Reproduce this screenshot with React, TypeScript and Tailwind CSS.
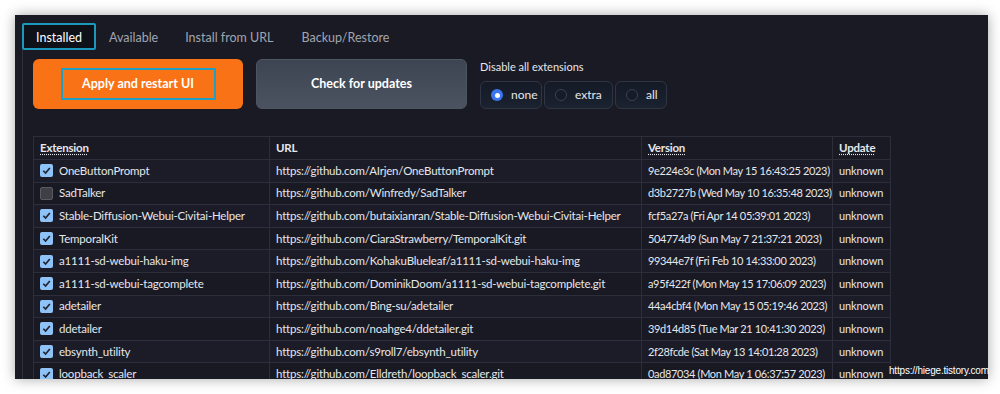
import React from "react";

const rows: [boolean, string, string, string][] = [
  [true, "OneButtonPrompt", "https://github.com/AIrjen/OneButtonPrompt", "9e224e3c (Mon May 15 16:43:25 2023)"],
  [false, "SadTalker", "https://github.com/Winfredy/SadTalker", "d3b2727b (Wed May 10 16:35:48 2023)"],
  [true, "Stable-Diffusion-Webui-Civitai-Helper", "https://github.com/butaixianran/Stable-Diffusion-Webui-Civitai-Helper", "fcf5a27a (Fri Apr 14 05:39:01 2023)"],
  [true, "TemporalKit", "https://github.com/CiaraStrawberry/TemporalKit.git", "504774d9 (Sun May 7 21:37:21 2023)"],
  [true, "a1111-sd-webui-haku-img", "https://github.com/KohakuBlueleaf/a1111-sd-webui-haku-img", "99344e7f (Fri Feb 10 14:33:00 2023)"],
  [true, "a1111-sd-webui-tagcomplete", "https://github.com/DominikDoom/a1111-sd-webui-tagcomplete.git", "a95f422f (Mon May 15 17:06:09 2023)"],
  [true, "adetailer", "https://github.com/Bing-su/adetailer", "44a4cbf4 (Mon May 15 05:19:46 2023)"],
  [true, "ddetailer", "https://github.com/noahge4/ddetailer.git", "39d14d85 (Tue Mar 21 10:41:30 2023)"],
  [true, "ebsynth_utility", "https://github.com/s9roll7/ebsynth_utility", "2f28fcde (Sat May 13 14:01:28 2023)"],
  [true, "loopback_scaler", "https://github.com/Elldreth/loopback_scaler.git", "0ad87034 (Mon May 1 06:37:57 2023)"],
];

function Check({ on }: { on: boolean }) {
  if (!on)
    return <span className="inline-block shrink-0 w-[13px] h-[13px] rounded-[2px] bg-[#3f3f46] border border-[#5a5a64]" />;
  return (
    <span className="inline-flex shrink-0 items-center justify-center w-[13px] h-[13px] rounded-[2px] bg-[#8fc3f7]">
      <svg width="11" height="11" viewBox="0 0 12 12">
        <path d="M2.5 6.3 L5 8.8 L9.6 3.2" fill="none" stroke="#1d2433" strokeWidth="1.8" />
      </svg>
    </span>
  );
}

function Radio({ label, on, w }: { label: string; on?: boolean; w: string }) {
  return (
    <div className={`flex items-center gap-[6px] h-[28px] pl-[10px] rounded-[6px] border border-[#2f3542] bg-gradient-to-b from-[#141a26] to-[#1b2230] ${w}`}>
      {on ? (
        <span className="w-[12px] h-[12px] rounded-full bg-[#3b76f0] flex items-center justify-center">
          <span className="w-[5px] h-[5px] rounded-full bg-white" />
        </span>
      ) : (
        <span className="w-[12px] h-[12px] rounded-full border border-[#3a4150] bg-[#151b27]" />
      )}
      <span className="text-[12px] text-[#e5e7eb] ml-[2px]">{label}</span>
    </div>
  );
}

const cell = "border border-[#2c2e3b] px-[6px] py-0 whitespace-nowrap overflow-hidden";

export default function App() {
  return (
    <div className="relative w-[1000px] h-[394px] bg-white overflow-hidden pt-[15px] pl-[15px]" style={{ fontFamily: "Lato, 'Noto Sans', sans-serif" }}>
      <div className="w-[973px] h-[364px] bg-[#191a24] shadow-[0_0_12px_rgba(0,0,0,0.35)] overflow-hidden pl-[7px] pt-[8px]">
        {/* tabs */}
        <div className="flex items-end h-[27px] text-[12.5px]">
          <div className="h-[27px] w-[74px] pt-[3px] flex items-center justify-center border-2 border-[#1d98bd] bg-[#0e1118] text-white rounded-[2px]">Installed</div>
          <div className="ml-[13px] h-[27px] pt-[3px] flex items-center text-[#a1a5b0]">Available</div>
          <div className="ml-[27px] h-[27px] pt-[3px] flex items-center text-[#a1a5b0]">Install from URL</div>
          <div className="ml-[28px] h-[27px] pt-[3px] flex items-center text-[#a1a5b0]">Backup/Restore</div>
        </div>
        <div className="border-l border-[#2c2f3c] pl-[10px] pt-[9px] h-[330px]">
          <div className="flex items-start">
            <div className="w-[210px] h-[50px] rounded-[6px] bg-[#f97316] flex items-center justify-center">
              <div className="w-[155px] h-[32px] border-2 border-[#1ea0c5] flex items-center justify-center text-white font-bold text-[12.5px]">Apply and restart UI</div>
            </div>
            <div className="ml-[13px] w-[211px] h-[50px] rounded-[6px] bg-gradient-to-b from-[#3d4553] to-[#4b5361] border border-[#4e5562] flex items-center justify-center text-white font-bold text-[12.5px]">
              Check for updates
            </div>
            <div className="ml-[13px] pt-[1px]">
              <div className="text-[11px] text-[#e5e7eb] h-[14px] leading-[14px]">Disable all extensions</div>
              <div className="flex gap-[2px] mt-[7px]">
                <Radio label="none" on w="w-[62px]" />
                <Radio label="extra" w="w-[69px]" />
                <Radio label="all" w="w-[52px]" />
              </div>
            </div>
          </div>
          <table className="mt-[27px] table-fixed w-[857px] border-collapse text-[11.5px] tracking-[-0.2px] text-[#e5e7eb]">
            <colgroup>
              <col className="w-[236px]" />
              <col className="w-[372px]" />
              <col className="w-[191px]" />
              <col className="w-[58px]" />
            </colgroup>
            <thead>
              <tr className="h-[23px] text-left">
                <th className={`${cell} font-bold`}><span className="underline decoration-dotted underline-offset-2">Extension</span></th>
                <th className={`${cell} font-bold`}>URL</th>
                <th className={`${cell} font-bold`}><span className="underline decoration-dotted underline-offset-2">Version</span></th>
                <th className={`${cell} font-bold`}><span className="underline decoration-dotted underline-offset-2">Update</span></th>
              </tr>
            </thead>
            <tbody>
              {rows.map((r, i) => (
                <tr key={i} className={`h-[22.6px] leading-[16px] ${i % 2 === 0 ? "bg-[#1b1c27]" : "bg-[#181923]"}`}>
                  <td className={cell}>
                    <div className="flex items-center gap-[6px]">
                      <Check on={r[0]} />
                      <span>{r[1]}</span>
                    </div>
                  </td>
                  <td className={cell}>{r[2]}</td>
                  <td className={`${cell} text-[11px] tracking-[-0.35px]`}>{r[3]}</td>
                  <td className={`${cell} text-[11px] tracking-[-0.1px]`}>unknown</td>
                </tr>
              ))}
            </tbody>
          </table>
        </div>
      </div>
      <div className="absolute left-[889px] top-[364px] w-[98px] h-[14px] leading-[14px] text-white bg-[#191a24] text-[10px] tracking-[-0.2px]" style={{ fontFamily: "'Liberation Sans', sans-serif" }}>
        https://hiege.tistory.com
      </div>
    </div>
  );
}
